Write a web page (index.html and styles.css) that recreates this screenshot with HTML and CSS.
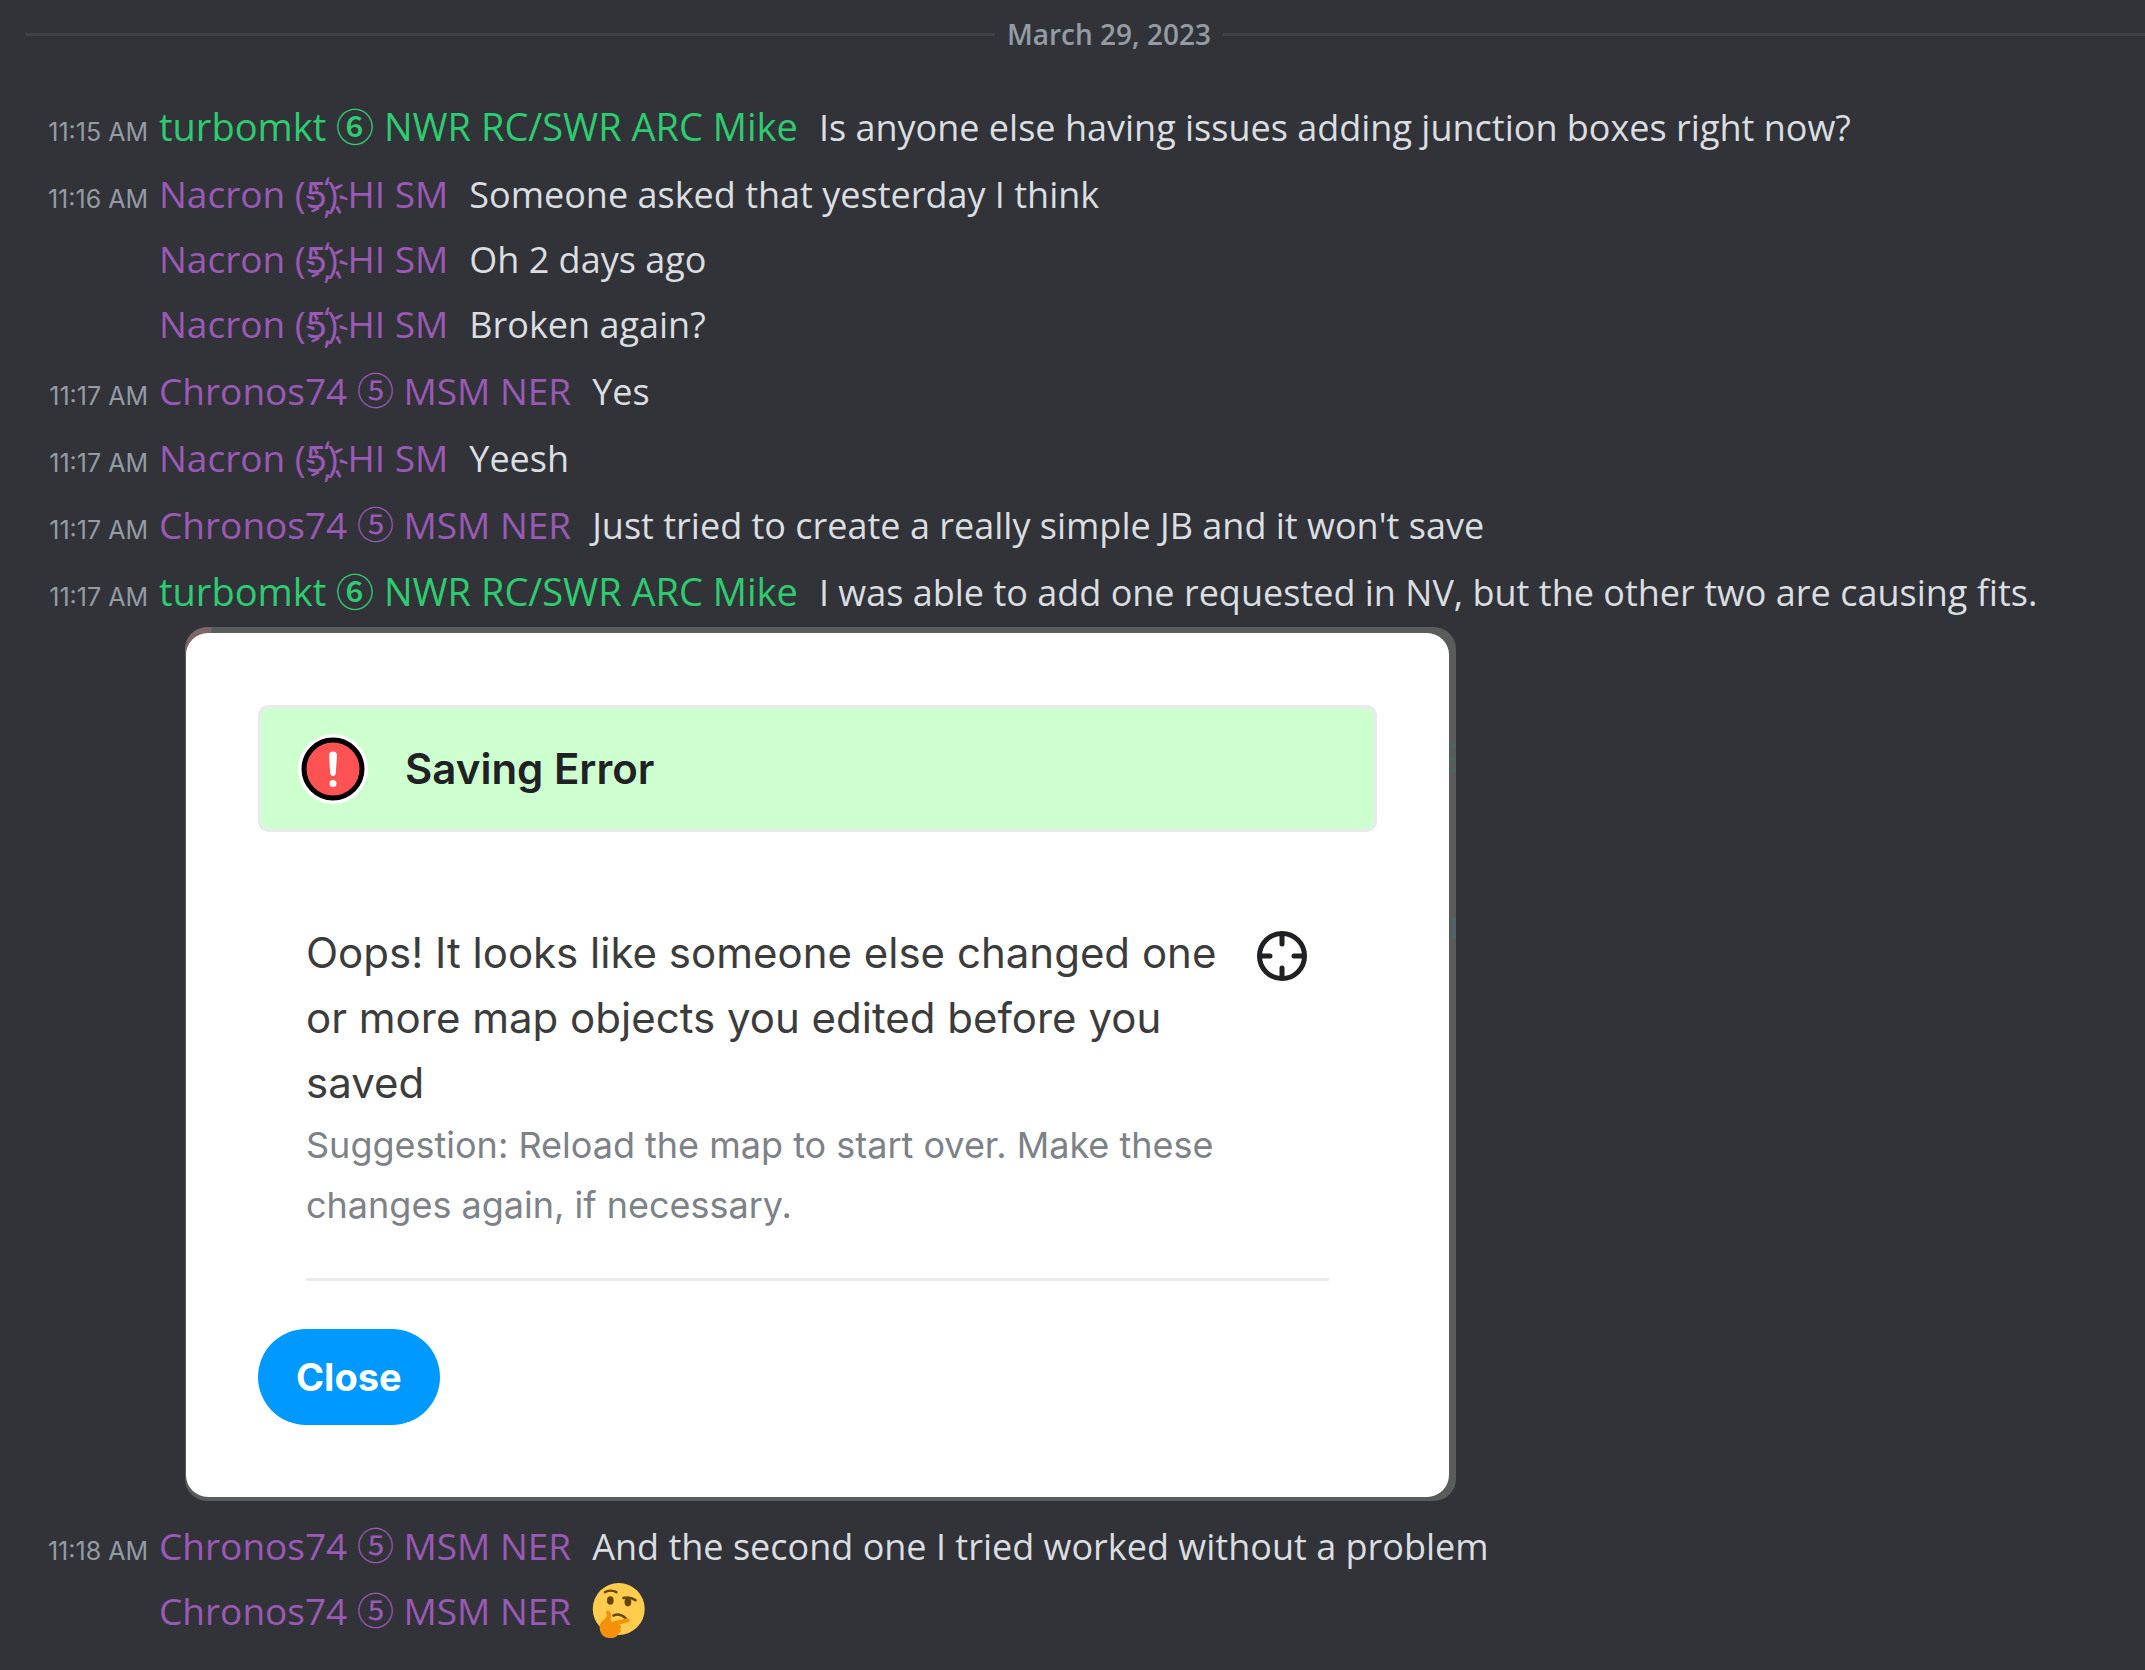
FILE: index.html
```
<!DOCTYPE html>
<html lang="en">

<head>
  <meta charset="UTF-8">
  <meta name="viewport" content="width=device-width, initial-scale=1">
  <title>Chat</title>
  <link rel="stylesheet" href="styles.css">
</head>

<body>
  <main class="chat">
    <div class="divider"><span>March 29, 2023</span></div>

    <div class="message start">
      <time>11:15 AM</time>
      <span class="name green">turbomkt ⑥ NWR RC/SWR ARC Mike</span>
      <span class="text">Is anyone else having issues adding junction boxes right now?</span>
    </div>
    <div class="message start">
      <time>11:16 AM</time>
      <span class="name purple">Nacron (<span class="ringed">5҉</span>) HI SM</span>
      <span class="text">Someone asked that yesterday I think</span>
    </div>
    <div class="message">
      <span class="name purple">Nacron (<span class="ringed">5҉</span>) HI SM</span>
      <span class="text">Oh 2 days ago</span>
    </div>
    <div class="message">
      <span class="name purple">Nacron (<span class="ringed">5҉</span>) HI SM</span>
      <span class="text">Broken again?</span>
    </div>
    <div class="message start">
      <time>11:17 AM</time>
      <span class="name purple">Chronos74 ⑤ MSM NER</span>
      <span class="text">Yes</span>
    </div>
    <div class="message start">
      <time>11:17 AM</time>
      <span class="name purple">Nacron (<span class="ringed">5҉</span>) HI SM</span>
      <span class="text">Yeesh</span>
    </div>
    <div class="message start">
      <time>11:17 AM</time>
      <span class="name purple">Chronos74 ⑤ MSM NER</span>
      <span class="text">Just tried to create a really simple JB and it won't save</span>
    </div>
    <div class="message start">
      <time>11:17 AM</time>
      <span class="name green">turbomkt ⑥ NWR RC/SWR ARC Mike</span>
      <span class="text">I was able to add one requested in NV, but the other two are causing fits.</span>
    </div>

    <div class="attachment">
      <section class="dialog">
        <header class="banner">
          <svg class="alert" viewBox="0 0 72 72" aria-hidden="true">
            <circle cx="36" cy="36" r="35" fill="#fff" />
            <circle cx="36" cy="36" r="29" fill="#ff5252" stroke="#000" stroke-width="5" />
            <path d="M32 22.500C32 20 33.500 18.500 36 18.500S40 20 40 22.500L38.800 40C38.600 42 37.500 43 36 43S33.400 42 33.200 40Z" fill="#fff" />
            <circle cx="36" cy="50.500" r="3.500" fill="#fff" />
          </svg>
          <h1>Saving Error</h1>
        </header>
        <div class="problem">
          <div class="details">
            <p class="reason">Oops! It looks like someone else changed one or more map objects you edited before you saved</p>
            <p class="hint">Suggestion: Reload the map to start over. Make these changes again, if necessary.</p>
          </div>
          <svg class="target" viewBox="0 0 50 50" aria-hidden="true">
            <circle cx="25" cy="25" r="22.500" />
            <path d="M25 3v10M25 37v10M3 25h10M37 25h10" />
          </svg>
        </div>
        <button type="button" class="close">Close</button>
      </section>
    </div>

    <div class="message start">
      <time>11:18 AM</time>
      <span class="name purple">Chronos74 ⑤ MSM NER</span>
      <span class="text">And the second one I tried worked without a problem</span>
    </div>
    <div class="message emoji-only">
      <span class="name purple">Chronos74 ⑤ MSM NER</span>
      <svg class="emoji" viewBox="0 0 36 36" role="img" aria-label="thinking face">
        <circle cx="17.500" cy="17" r="17" fill="#ffcc4d" />
        <ellipse cx="12" cy="11.500" rx="2.200" ry="2.800" fill="#664500" />
        <ellipse cx="23.500" cy="12.500" rx="2.200" ry="2.800" fill="#664500" />
        <path d="M8.500 6Q12 4 16 6M20.500 9.800Q25 8.600 28.500 11.300M14 21.300Q18 19.500 22 23" fill="none" stroke="#664500" stroke-width="1.600" stroke-linecap="round" />
        <path d="M9.200 19C9.200 17.600 12 17.800 12.400 20L12.300 25.200C14 25.600 21 23.300 23.200 23.100C25 23 25.200 25 23.700 25.500L17.800 27.400C19.500 28 19.300 29.600 18.500 30C19.400 31 18.600 32.600 17.500 33C16.500 35.500 14 36 11.500 36C7.500 36 5 33 5 29C5 25 9 24 9.700 21.500C9.900 20.500 9.200 20 9.200 19Z" fill="#f4900c" />
      </svg>
    </div>
  </main>
</body>

</html>
```
FILE: styles.css
```
* {
  box-sizing: border-box;
}

body {
  margin: 0;
  background-color: #313338;
  color: #dbdee1;
  font-family: "Open Sans", "Noto Sans CJK JP", sans-serif;
  font-size: 36px;
  overflow-x: hidden;
}

.chat {
  padding-bottom: 24px;
}

/* the right rule runs on past the edge of the window */
.divider {
  display: flex;
  align-items: center;
  gap: 12px;
  height: 68px;
  margin: 0 -48px 26px 25px;
  color: #949ba4;
  font-size: 28px;
  font-weight: 600;
}

.divider::before,
.divider::after {
  content: "";
  flex: 1;
  height: 3px;
  background-color: #3f4147;
}

.message {
  display: flex;
  align-items: baseline;
  height: 65px;
  padding-left: 159px;
  line-height: 65px;
  white-space: nowrap;
}

.message.start {
  margin-top: 2px;
  padding-left: 0;
}

time {
  width: 159px;
  padding-right: 11px;
  color: #949ba4;
  font-family: Inter, sans-serif;
  font-size: 25px;
  text-align: right;
}

.name {
  margin-right: 21px;
  font-size: 37px;
}

.green {
  color: #2ecc71;
  font-size: 38px;
  font-weight: 500;
}

.purple {
  color: #9b59b6;
}

.ringed {
  font-family: "Noto Sans", sans-serif;
}

.emoji-only {
  align-items: center;
}

.emoji {
  width: 55px;
  height: 55px;
}

/* a sliver of the dimmed map shows round the dialog */
.attachment {
  width: fit-content;
  margin: 3px 0 12px 185px;
  padding: 6px 7px 4px 1px;
  border-radius: 22px;
  background:
    linear-gradient(#4c6668, #4c6668) right 118px / 7px 3px no-repeat,
    linear-gradient(#4c6668, #4c6668) right 130px / 7px 3px no-repeat,
    linear-gradient(#4c6668, #4c6668) right 142px / 7px 3px no-repeat,
    linear-gradient(#4c6668, #4c6668) right 290px / 4px 22px no-repeat,
    radial-gradient(circle at top left, #7b6767 26px, transparent 27px),
    #5a5b5b;
}

.dialog {
  max-width: 1263px;
  padding: 72px;
  border-radius: 22px;
  background-color: #fff;
  color: #202124;
  font-family: Inter, sans-serif;
}

.banner {
  display: flex;
  align-items: center;
  gap: 36px;
  height: 127px;
  padding: 0 36px;
  border: 3px solid #e8eaed;
  border-radius: 10px;
  background-color: #ceffce;
}

.alert {
  width: 72px;
  height: 72px;
}

.banner h1 {
  margin: 0;
  font-size: 42px;
  font-weight: 600;
}

.problem {
  display: flex;
  gap: 36px;
  margin: 88px 48px 48px;
  padding-bottom: 43px;
  border-bottom: 3px solid #e8eaed;
}

.details {
  flex: 1;
}

.details p {
  margin: 0;
}

.reason {
  color: #3c3c3c;
  font-size: 42px;
  line-height: 65px;
}

.hint {
  color: #7d8188;
  font-size: 36px;
  line-height: 60px;
}

.target {
  width: 50px;
  height: 50px;
  margin: 11px 22px 0 0;
  fill: none;
  stroke: #202124;
  stroke-width: 5;
  stroke-linecap: round;
}

.close {
  height: 96px;
  padding: 0 38px;
  border: none;
  border-radius: 48px;
  background-color: #0099ff;
  color: #fff;
  font-family: Inter, sans-serif;
  font-size: 38px;
  font-weight: 700;
  cursor: pointer;
}
```
